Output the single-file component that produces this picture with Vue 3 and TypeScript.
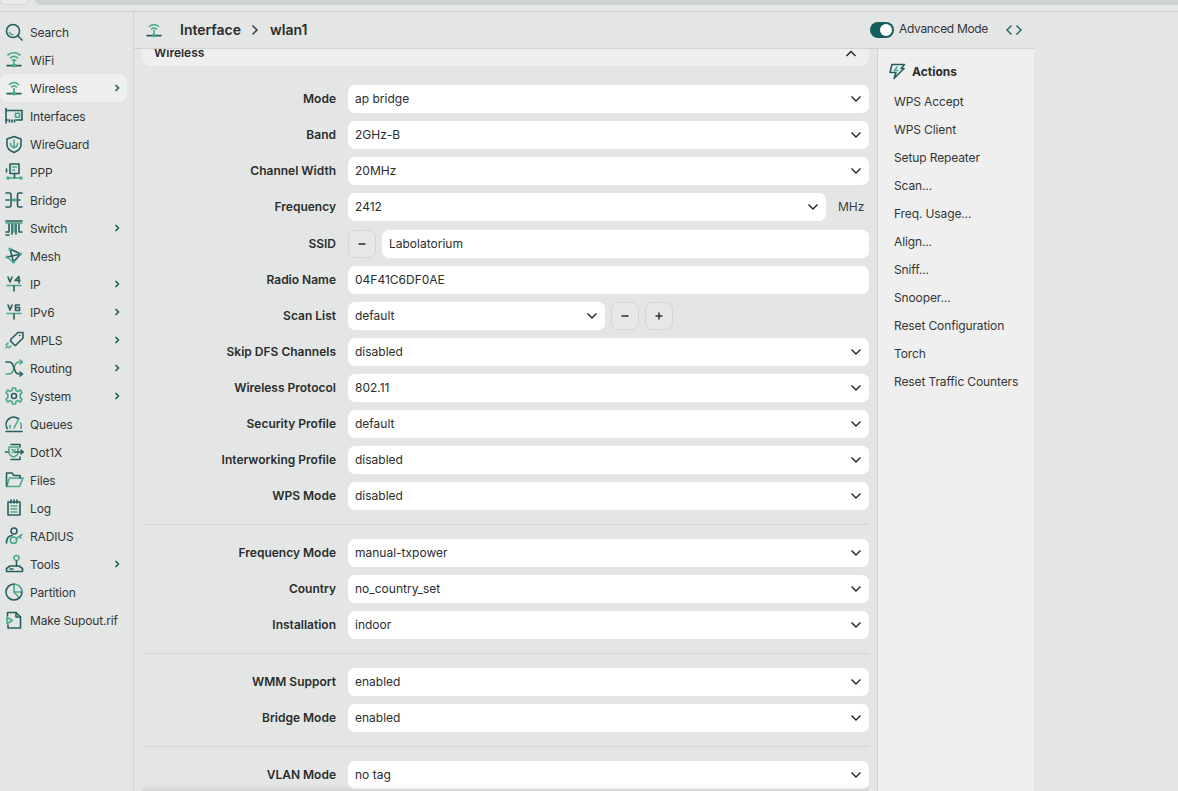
<script setup lang="ts">
interface Icon { d: string[]; l: string[]; f?: string[] }
const icons: Record<string, Icon> = {
  search: { d: ['M9 2.5a6.5 6.5 0 1 0 0 13a6.5 6.5 0 1 0 0-13z', 'M13.8 13.8L18 18'], l: ['M5.5 10.5a4 4 0 0 0 3.5 2.2'] },
  wifi: { d: ['M3 15.6H17'], l: ['M4 5Q10 .4 16 5', 'M6.3 8Q10 4.8 13.7 8', 'M8.4 10.4Q10 9.4 11.6 10.4', 'M10 10.5V15.6'], f: ['M10 13.6a2 2 0 1 0 0 4a2 2 0 1 0 0-4z'] },
  wireless: { d: ['M3 15.6H17'], l: ['M5.5 6.5Q10 2.5 14.5 6.5', 'M7.6 9Q10 7 12.4 9', 'M10 10.5V15.6'], f: ['M10 13.6a2 2 0 1 0 0 4a2 2 0 1 0 0-4z'] },
  interfaces: { d: ['M2 2.5V17', 'M2 4.5H18V14H12', 'M2 14H4', 'M5.5 14V16M8 14V16M10.5 14V16'], l: ['M11.5 7.2H15.5V11.2H11.5z'] },
  wireguard: { d: ['M10 2.5L17 5V11Q17 15.5 10 18.5Q3 15.5 3 11V5z'], l: ['M10 6V14', 'M6.5 9.5Q6.5 13 10 13.5Q13.5 13 13.5 9.5'] },
  ppp: { d: ['M6 2H15V11.5H6z', 'M2.5 7V10', 'M10.5 11.5V15.5'], l: ['M4 16H17', 'M8.5 5H12.5', 'M8.5 8H10.5'], f: ['M4 14.2a1.8 1.8 0 1 0 0 3.6a1.8 1.8 0 1 0 0-3.6z', 'M17 14.2a1.8 1.8 0 1 0 0 3.6a1.8 1.8 0 1 0 0-3.6z'] },
  bridge: { d: ['M2 3H5.5Q7 3 7 4.5V15.5Q7 17 5.5 17H2', 'M18 3H15Q13.5 3 13.5 4.5V15.5Q13.5 17 15 17H18', 'M2 10H5M13.5 10H16'], l: ['M7 10H13.5'], f: ['M10 8.3a1.7 1.7 0 1 0 0 3.4a1.7 1.7 0 1 0 0-3.4z'] },
  sw: { d: ['M2 3H18', 'M5 6V14H2', 'M8 6V16', 'M12 6V16', 'M15 6V14H18', 'M2 17H5'], l: ['M10 6V14', 'M2 5H18'] },
  mesh: { d: ['M6 3L9.5 16L16.5 8z', 'M3 11L15 8.5'], l: ['M3 11L9 16'], f: ['M6 1.6a1.6 1.6 0 1 0 0 3.2a1.6 1.6 0 1 0 0-3.2z', 'M16.5 6.4a1.6 1.6 0 1 0 0 3.2a1.6 1.6 0 1 0 0-3.2z', 'M9.5 14.4a1.6 1.6 0 1 0 0 3.2a1.6 1.6 0 1 0 0-3.2z', 'M3 9.4a1.6 1.6 0 1 0 0 3.2a1.6 1.6 0 1 0 0-3.2z'] },
  ip: { d: ['M4 3L6 8L8 3', 'M15 2.5L11 6.5H16M15 2.5V9', 'M10 12V17'], l: ['M3 11.5H17'] },
  ip6: { d: ['M4 3L6 8L8 3', 'M15.5 3H11.5V8.5H15.5V5.5H11.5', 'M10 12V17'], l: ['M3 11.5H17'] },
  mpls: { d: ['M7 9L14 2.5H19V8L12 15L11 15.5L6.5 11z', 'M15.5 5.5h.5'], l: ['M2 18L4 16', 'M5 18L7 16', 'M2 15L4 13'] },
  routing: { d: ['M2 4H5Q7 4 8.5 6L11.5 14Q13 16 15 16H18', 'M16 14L18.5 16L16 18'], l: ['M2 16H5Q7 16 8.5 14L11.5 6Q13 4 15 4H18', 'M16 2L18.5 4L16 6'] },
  system: { d: ['M10 7.5a2.5 2.5 0 1 0 0 5a2.5 2.5 0 1 0 0-5z'], l: ['M8.5 2H11.5L12 4.4L14.2 5.4L16.4 4L18 6.6L16.2 8.3V11.7L18 13.4L16.4 16L14.2 14.6L12 15.6L11.5 18H8.5L8 15.6L5.8 14.6L3.6 16L2 13.4L3.8 11.7V8.3L2 6.6L3.6 4L5.8 5.4L8 4.4z'] },
  queues: { d: ['M3.2 14.5A7.5 7.5 0 0 1 14 4.5', 'M2 17.5H18'], l: ['M10 14L15 4.5', 'M16.5 9A7.5 7.5 0 0 1 17 14.5', 'M6 11.5V14'] },
  dot1x: { d: ['M7 2.5H16V5M7 17.5H16V15', 'M11 10H19', 'M17 8L19 10L17 12', 'M1.5 10H4'], l: ['M5 5H14V10.5Q14 13.5 9.5 15Q5 13.5 5 10.5z', 'M8 7.5L11 10.5M11 7.5L8 10.5'] },
  files: { d: ['M2.5 16V3H8L10 5.5H16V8'], l: ['M2.5 16.5L5.5 8H19L15.5 16.5z'] },
  log: { d: ['M4 4H16V17H4z', 'M7 2V5M10 2V5M13 2V5'], l: ['M7 8H13', 'M7 11H13', 'M7 14H13'] },
  radius: { d: ['M10 2a3 3 0 1 0 0 6a3 3 0 1 0 0-6z', 'M2.5 17Q2.5 10 8 9.5'], l: ['M9.5 11a3.2 3.2 0 1 0 0 6.4a3.2 3.2 0 1 0 0-6.4z', 'M12.5 12.5L18 8.5', 'M15.5 10.5L17 12'] },
  tools: { d: ['M2.5 17.5H18.5V14.5L15 12H6L2.5 14.5z', 'M6 15H9', 'M12.5 7V12'], l: ['M12.5 1.5a2.5 2.5 0 1 0 0 5a2.5 2.5 0 1 0 0-5z'] },
  partition: { d: ['M10 2a8 8 0 1 0 8 8'], l: ['M10 2V10H18A8 8 0 0 0 10 2z', 'M10 10L15.5 16'] },
  supout: { d: ['M3.5 6V2.5H12L16.5 7V18H4V15', 'M12 2.5V7H16.5'], l: ['M3 7.5V13.5L8.5 10.5z'] }
}

const menu = [
  ['Search', 'search', 0], ['WiFi', 'wifi', 0], ['Wireless', 'wireless', 1], ['Interfaces', 'interfaces', 0],
  ['WireGuard', 'wireguard', 0], ['PPP', 'ppp', 0], ['Bridge', 'bridge', 0], ['Switch', 'sw', 1], ['Mesh', 'mesh', 0],
  ['IP', 'ip', 1], ['IPv6', 'ip6', 1], ['MPLS', 'mpls', 1], ['Routing', 'routing', 1], ['System', 'system', 1],
  ['Queues', 'queues', 0], ['Dot1X', 'dot1x', 0], ['Files', 'files', 0], ['Log', 'log', 0], ['RADIUS', 'radius', 0],
  ['Tools', 'tools', 1], ['Partition', 'partition', 0], ['Make Supout.rif', 'supout', 0]
] as [string, string, number][]

const actions = ['WPS Accept', 'WPS Client', 'Setup Repeater', 'Scan...', 'Freq. Usage...', 'Align...', 'Sniff...', 'Snooper...', 'Reset Configuration', 'Torch', 'Reset Traffic Counters']

const group1a = [['Mode', 'ap bridge'], ['Band', '2GHz-B'], ['Channel Width', '20MHz']]
const group1b = [['Skip DFS Channels', 'disabled'], ['Wireless Protocol', '802.11'], ['Security Profile', 'default'], ['Interworking Profile', 'disabled'], ['WPS Mode', 'disabled']]
const group2 = [['Frequency Mode', 'manual-txpower'], ['Country', 'no_country_set'], ['Installation', 'indoor']]
const group3 = [['WMM Support', 'enabled'], ['Bridge Mode', 'enabled']]
const group4 = [['VLAN Mode', 'no tag']]
</script>

<template>
  <div class="page">
    <div class="top">
      <div class="tab"></div>
      <div class="band"></div>
    </div>
    <div class="body">
      <nav class="side">
        <a v-for="m in menu" :key="m[0]" class="item" :class="{ on: m[0] === 'Wireless' }">
          <svg class="ic" viewBox="0 0 20 20" fill="none">
            <path v-for="(p, i) in icons[m[1]].l" :key="'l' + i" :d="p" class="lt" />
            <path v-for="(p, i) in icons[m[1]].d" :key="'d' + i" :d="p" class="dk" />
            <path v-for="(p, i) in icons[m[1]].f || []" :key="'f' + i" :d="p" class="fl" />
          </svg>
          <span class="lbl">{{ m[0] }}</span>
          <svg v-if="m[2]" class="arrow" viewBox="0 0 6 8" fill="none"><path d="M1.5 1L4.5 4L1.5 7" /></svg>
        </a>
      </nav>
      <div class="content">
        <header class="head">
          <svg class="hic" viewBox="0 0 20 20" fill="none">
            <path v-for="(p, i) in icons.wireless.l" :key="i" :d="p" class="lt" />
            <path v-for="(p, i) in icons.wireless.d" :key="i" :d="p" class="dk" />
            <path v-for="(p, i) in icons.wireless.f" :key="i" :d="p" class="fl" />
          </svg>
          <span class="crumb">Interface</span>
          <svg class="sep" viewBox="0 0 8 12" fill="none"><path d="M1.5 1.5L6 6L1.5 10.5" /></svg>
          <span class="crumb">wlan1</span>
          <div class="toggle"><i></i></div>
          <span class="adv">Advanced Mode</span>
          <svg class="code" viewBox="0 0 16 12" fill="none"><path d="M5.5 1.5L1 6L5.5 10.5" /><path d="M10.5 1.5L15 6L10.5 10.5" /></svg>
        </header>
        <div class="lower">
          <main class="main">
            <div class="sec">
              <span>Wireless</span>
              <svg class="up" viewBox="0 0 12 8" fill="none"><path d="M1.5 6L6 1.5L10.5 6" /></svg>
            </div>
            <div class="rows first">
              <div v-for="r in group1a" :key="r[0]" class="row">
                <label>{{ r[0] }}</label>
                <div class="sel"><span>{{ r[1] }}</span><svg class="chev" viewBox="0 0 12 8" fill="none"><path d="M1.5 1.5L6 6L10.5 1.5" /></svg></div>
              </div>
              <div class="row">
                <label>Frequency</label>
                <div class="sel"><span>2412</span><svg class="chev" viewBox="0 0 12 8" fill="none"><path d="M1.5 1.5L6 6L10.5 1.5" /></svg></div>
                <span class="unit">MHz</span>
              </div>
              <div class="row ssid">
                <label>SSID</label>
                <button class="btn"><svg viewBox="0 0 10 10"><path d="M1.5 5H8.5" /></svg></button>
                <div class="sel"><span>Labolatorium</span></div>
              </div>
              <div class="row">
                <label>Radio Name</label>
                <div class="sel"><span>04F41C6DF0AE</span></div>
              </div>
              <div class="row">
                <label>Scan List</label>
                <div class="sel scan"><span>default</span><svg class="chev" viewBox="0 0 12 8" fill="none"><path d="M1.5 1.5L6 6L10.5 1.5" /></svg></div>
                <button class="btn"><svg viewBox="0 0 10 10"><path d="M1.5 5H8.5" /></svg></button>
                <button class="btn"><svg viewBox="0 0 10 10"><path d="M1.5 5H8.5M5 1.5V8.5" /></svg></button>
              </div>
              <div v-for="r in group1b" :key="r[0]" class="row">
                <label>{{ r[0] }}</label>
                <div class="sel"><span>{{ r[1] }}</span><svg class="chev" viewBox="0 0 12 8" fill="none"><path d="M1.5 1.5L6 6L10.5 1.5" /></svg></div>
              </div>
            </div>
            <hr />
            <div class="rows">
              <div v-for="r in group2" :key="r[0]" class="row">
                <label>{{ r[0] }}</label>
                <div class="sel"><span>{{ r[1] }}</span><svg class="chev" viewBox="0 0 12 8" fill="none"><path d="M1.5 1.5L6 6L10.5 1.5" /></svg></div>
              </div>
            </div>
            <hr />
            <div class="rows">
              <div v-for="r in group3" :key="r[0]" class="row">
                <label>{{ r[0] }}</label>
                <div class="sel"><span>{{ r[1] }}</span><svg class="chev" viewBox="0 0 12 8" fill="none"><path d="M1.5 1.5L6 6L10.5 1.5" /></svg></div>
              </div>
            </div>
            <hr />
            <div class="rows">
              <div v-for="r in group4" :key="r[0]" class="row">
                <label>{{ r[0] }}</label>
                <div class="sel"><span>{{ r[1] }}</span><svg class="chev" viewBox="0 0 12 8" fill="none"><path d="M1.5 1.5L6 6L10.5 1.5" /></svg></div>
              </div>
            </div>
            <div class="fade"></div>
          </main>
          <aside class="panel">
            <div class="ptitle">
              <svg class="bolt" viewBox="0 0 18 18" fill="none">
                <path class="dk" d="M4 2.5H16.5L13 6.5H16L6 16.5L8 10.5H2z" />
                <path class="lt" d="M9 5L6.5 8.5H10" />
              </svg>
              <span>Actions</span>
            </div>
            <a v-for="a in actions" :key="a" class="act">{{ a }}</a>
          </aside>
        </div>
      </div>
    </div>
  </div>
</template>

<style>
html, body { margin: 0; background: #e4e6e5; overflow: hidden; }
</style>

<style scoped>
.page {
  height: 791px; width: 1178px; overflow: hidden; display: flex; flex-direction: column;
  background: #e4e6e5; color: #2a2d2d;
  font-family: Inter, "Noto Sans", sans-serif; font-size: 12px;
}
.top { height: 11px; flex: none; display: flex; gap: 6px; border-bottom: 1px solid #cfd3d2; box-sizing: content-box; }
.tab { width: 27px; height: 4px; border: 1px solid #d3d6d5; border-top: 0; border-radius: 0 0 6px 6px; background: #e9ebea; }
.band { flex: 1; height: 5px; background: #ced3d3; border-radius: 0 0 0 6px; }
.body { flex: 1; display: flex; min-height: 0; }
.side { width: 133px; flex: none; border-right: 1px solid #cfd3d2; padding-top: 6px; }
.item { display: flex; align-items: center; height: 28px; width: 127px; padding-left: 4px; box-sizing: border-box; color: #333636; }
.item.on { background: #efefef; border-radius: 8px; }
.ic { width: 20px; height: 20px; flex: none; }
.lbl { margin-left: 6px; flex: 1; white-space: nowrap; font-size: 12px; letter-spacing: -0.15px; }
.arrow { width: 6px; height: 8px; margin-right: 7px; stroke: #1f5d5e; stroke-width: 1.6; }
.lt { stroke: #4aa98b; stroke-width: 1.6; stroke-linejoin: round; stroke-linecap: round; }
.dk { stroke: #24605f; stroke-width: 1.6; stroke-linejoin: round; stroke-linecap: round; }
.fl { fill: #4aa98b; }
.content { width: 900px; flex: none; display: flex; flex-direction: column; min-height: 0; }
.head { height: 36px; flex: none; display: flex; align-items: center; border-bottom: 1px solid #cfd3d2; padding-left: 10px; }
.hic { width: 20px; height: 20px; margin-right: 16px; flex: none; }
.crumb { font-size: 14px; font-weight: 600; color: #2a2d2d; padding-bottom: 2px; }
.sep { width: 8px; height: 12px; margin: 0 11px 0 10px; stroke: #333; stroke-width: 1.4; }
.toggle { margin-left: auto; width: 24px; height: 16px; border-radius: 8px; background: #125e5d; position: relative; }
.toggle i { position: absolute; right: 2px; top: 2px; width: 12px; height: 12px; border-radius: 50%; background: #fff; }
.adv { margin-left: 5px; font-size: 12px; color: #333636; letter-spacing: -0.32px; padding-bottom: 3px; }
.code { width: 16px; height: 12px; margin: 0 12px 0 18px; stroke: #1f5d5e; stroke-width: 1.4; }
.lower { flex: 1; display: flex; min-height: 0; }
.main { width: 743px; flex: none; padding: 0 8px; box-sizing: border-box; overflow: hidden; position: relative; }
.sec { height: 17px; background: #efefef; border-radius: 0 0 8px 8px; display: flex; align-items: flex-end; justify-content: space-between; padding: 0 12px; overflow: hidden; font-weight: 600; font-size: 12px; }
.sec span { line-height: 14px; padding-bottom: 6px; }
.up { width: 12px; height: 8px; margin: 0 0 8px; stroke: #222; stroke-width: 1.4; }
.rows { display: flex; flex-direction: column; gap: 8px; }
.rows.first { margin-top: 19px; }
.row { display: flex; align-items: center; height: 28px; gap: 6px; }
.row.ssid { margin-top: 1px; }
label { width: 194px; margin-right: 6px; padding-bottom: 2px; text-align: right; font-weight: 600; font-size: 12px; color: #2a2d2d; flex: none; white-space: nowrap; }
.sel { flex: 1; height: 28px; background: #fff; border-radius: 7px; display: flex; align-items: center; justify-content: space-between; padding: 0 7px 0 7px; box-sizing: border-box; font-size: 12px; color: #2a2d2d; }
.sel span { margin-bottom: 2px; }
.sel.scan { flex: none; width: 257px; }
.unit { width: 31px; margin-left: 6px; font-size: 12px; color: #3d4040; flex: none; padding-bottom: 1px; }
.chev { width: 12px; height: 8px; stroke: #222; stroke-width: 1.4; }
.btn { width: 28px; height: 28px; flex: none; padding: 0; border: 1px solid #d4d6d5; border-radius: 7px; background: #e6e8e7; display: flex; align-items: center; justify-content: center; }
.btn svg { width: 10px; height: 10px; stroke: #333; stroke-width: 1.6; fill: none; }
hr { border: 0; border-top: 1px solid #d3d6d5; margin: 14px 0; }
.fade { position: absolute; left: 8px; right: 8px; bottom: 0; height: 6px; background: linear-gradient(to bottom, rgba(120,125,125,0), rgba(120,125,125,.16)); border-radius: 8px 8px 0 0; }
.panel { width: 157px; flex: none; background: #efefef; border-left: 1px solid #cfd3d2; box-sizing: border-box; padding: 14px 0 0 16px; display: flex; flex-direction: column; }
.ptitle { height: 16px; display: flex; align-items: center; margin: 0 0 9px -6px; font-size: 12px; font-weight: 700; }
.bolt { width: 18px; height: 18px; margin-right: 6px; flex: none; }
.act { height: 28px; line-height: 28px; font-size: 12px; color: #333636; white-space: nowrap; letter-spacing: -0.12px; }
</style>
